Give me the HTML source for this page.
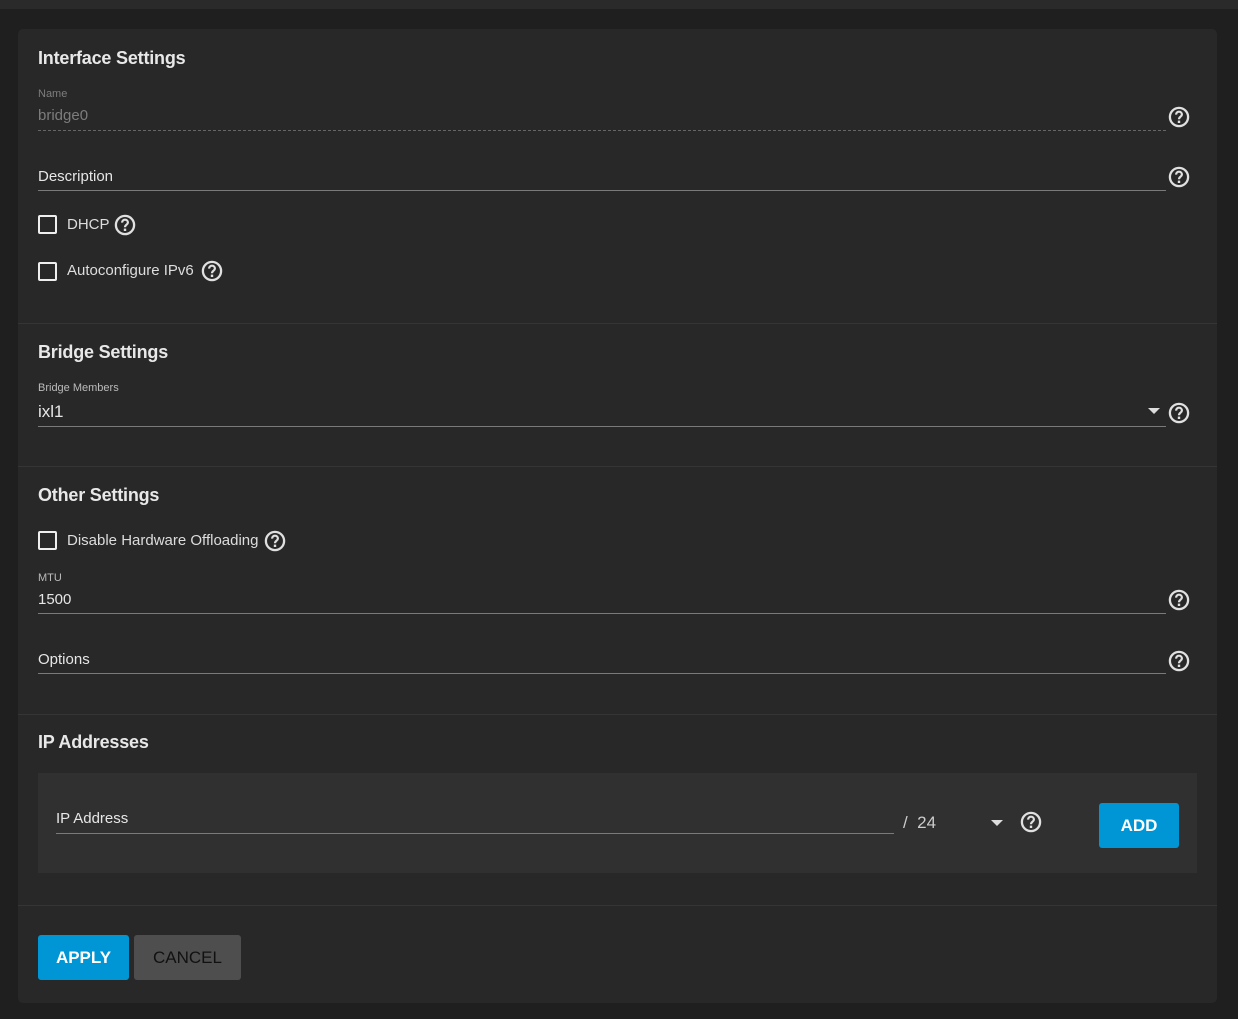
<!DOCTYPE html>
<html><head><meta charset="utf-8">
<style>
*{box-sizing:border-box;margin:0;padding:0}
body{width:1238px;height:1019px;background:#1f1f1f;font-family:"Liberation Sans",Arial,sans-serif;color:#e6e6e6;position:relative;overflow:hidden}
.top{position:absolute;left:0;top:0;width:1238px;height:9px;background:#2a2a2a}
.card{position:absolute;left:18px;top:29px;width:1199px;height:974px;background:#282828;border-radius:5px}
.a{position:absolute}
h2{position:absolute;font-size:18px;font-weight:bold;color:#e8e8e8;letter-spacing:-0.2px}
.lbl{position:absolute;font-size:11px;color:#bbb}
.val{position:absolute;font-size:15px;color:#e6e6e6}
.line{position:absolute;height:1px;background:#7a7a7a}
.sep{position:absolute;left:18px;width:1199px;height:1px;background:#353535}
.cb{position:absolute;width:19px;height:19px;border:2px solid #eee;border-radius:2px}
.ct{position:absolute;font-size:15px;color:#ddd}
.help{position:absolute;width:24px;height:24px}
.btn{position:absolute;border-radius:3px;font-size:17px;font-weight:bold;text-align:center}
.caret{position:absolute;width:0;height:0;border-left:6px solid transparent;border-right:6px solid transparent;border-top:6px solid #ddd}
</style></head><body>
<div class="top"></div>
<div class="card"></div>

<svg width="0" height="0" style="position:absolute"><defs><symbol id="h" viewBox="0 0 24 24"><circle cx="12" cy="12" r="9.1" fill="none" stroke="#e0e0e0" stroke-width="2.3"/><path d="M9.1 9.6c0-1.7 1.3-2.9 2.9-2.9s2.9 1.2 2.9 2.8c0 2.2-2.9 2.2-2.9 4.7" fill="none" stroke="#e0e0e0" stroke-width="2.2"/><rect x="10.8" y="15.6" width="2.4" height="2.4" fill="#e0e0e0"/></symbol></defs></svg>

<h2 style="left:38px;top:48px">Interface Settings</h2>
<div class="lbl" style="left:38px;top:88px;color:#7d7d7d">Name</div>
<div class="val" style="left:38px;top:107px;color:#7d7d7d">bridge0</div>
<div class="a" style="left:38px;top:130px;width:1128px;border-top:1px dashed #666"></div>
<svg class="help" style="left:1167px;top:105px"><use href="#h"/></svg>

<div class="val" style="left:38px;top:168px">Description</div>
<div class="line" style="left:38px;top:190px;width:1128px"></div>
<svg class="help" style="left:1167px;top:165px"><use href="#h"/></svg>

<div class="cb" style="left:38px;top:215px"></div>
<div class="ct" style="left:67px;top:216px">DHCP</div>
<svg class="help" style="left:113px;top:213px"><use href="#h"/></svg>
<div class="cb" style="left:38px;top:262px"></div>
<div class="ct" style="left:67px;top:262px">Autoconfigure IPv6</div>
<svg class="help" style="left:200px;top:259px"><use href="#h"/></svg>

<div class="sep" style="top:323px"></div>
<h2 style="left:38px;top:342px">Bridge Settings</h2>
<div class="lbl" style="left:38px;top:382px">Bridge Members</div>
<div class="val" style="left:38px;top:402px;font-size:17px">ixl1</div>
<div class="line" style="left:38px;top:426px;width:1128px"></div>
<div class="caret" style="left:1148px;top:408px"></div>
<svg class="help" style="left:1167px;top:401px"><use href="#h"/></svg>

<div class="sep" style="top:466px"></div>
<h2 style="left:38px;top:485px">Other Settings</h2>
<div class="cb" style="left:38px;top:531px"></div>
<div class="ct" style="left:67px;top:532px">Disable Hardware Offloading</div>
<svg class="help" style="left:263px;top:529px"><use href="#h"/></svg>
<div class="lbl" style="left:38px;top:572px">MTU</div>
<div class="val" style="left:38px;top:591px">1500</div>
<div class="line" style="left:38px;top:613px;width:1128px"></div>
<svg class="help" style="left:1167px;top:588px"><use href="#h"/></svg>
<div class="val" style="left:38px;top:651px">Options</div>
<div class="line" style="left:38px;top:673px;width:1128px"></div>
<svg class="help" style="left:1167px;top:649px"><use href="#h"/></svg>

<div class="sep" style="top:714px"></div>
<h2 style="left:38px;top:732px">IP Addresses</h2>
<div class="a" style="left:38px;top:773px;width:1159px;height:100px;background:#303030"></div>
<div class="val" style="left:56px;top:810px">IP Address</div>
<div class="line" style="left:56px;top:833px;width:838px"></div>
<div class="val" style="left:903px;top:813px;font-size:17px;color:#ccc">/&nbsp;&nbsp;24</div>
<div class="caret" style="left:991px;top:820px"></div>
<svg class="help" style="left:1019px;top:810px"><use href="#h"/></svg>
<div class="btn" style="left:1099px;top:803px;width:80px;height:45px;line-height:45px;background:#0095d5;color:#fff">ADD</div>

<div class="sep" style="top:905px"></div>
<div class="btn" style="left:38px;top:935px;width:91px;height:45px;line-height:45px;background:#0095d5;color:#fff">APPLY</div>
<div class="btn" style="left:134px;top:935px;width:107px;height:45px;line-height:45px;background:#4e4e4e;color:#111;font-weight:normal">CANCEL</div>
</body></html>
